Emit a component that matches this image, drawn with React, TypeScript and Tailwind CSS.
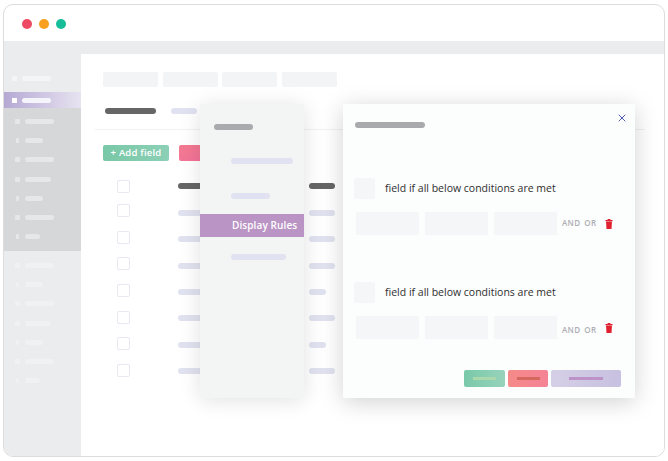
import { X } from "lucide-react"
import { clsx as cn } from "clsx"

const FONT = "font-['Open_Sans','Noto_Sans',sans-serif]"

const NAV_ITEMS = [
  { bar: 29, icon: 5 },
  { bar: 18, icon: 3 },
  { bar: 29, icon: 5 },
  { bar: 26, icon: 5 },
  { bar: 18, icon: 3 },
  { bar: 29, icon: 5 },
  { bar: 15, icon: 3 },
]

const ROWS = [
  { top: "mt-[19px]", bar: "mt-[3px]", dark: true, last: 26 },
  { top: "mt-[11px]", bar: "mt-[6px]", dark: false, last: 26 },
  { top: "mt-[14px]", bar: "mt-[5px]", dark: false, last: 26 },
  { top: "mt-[13px]", bar: "mt-[6px]", dark: false, last: 26 },
  { top: "mt-[14px]", bar: "mt-[5px]", dark: false, last: 17 },
  { top: "mt-[14px]", bar: "mt-[4px]", dark: false, last: 26 },
  { top: "mt-[13px]", bar: "mt-[5px]", dark: false, last: 17 },
  { top: "mt-[14px]", bar: "mt-[4px]", dark: false, last: 26 },
]

function NavItem({ bar, icon, tone }: { bar: number; icon: number; tone: "dark" | "light" }) {
  const color = tone === "dark" ? "bg-[#e6e7e9]" : "bg-[#f0f1f2]"
  return (
    <div className="flex h-[19.2px] items-center pl-[11px]">
      <span className="flex w-[5px] justify-center">
        <span className={cn("h-[5px] rounded-[1px]", color)} style={{ width: icon }} />
      </span>
      <span className={cn("ml-[5px] h-[5px] rounded-full", color)} style={{ width: bar }} />
    </div>
  )
}

function Sidebar() {
  return (
    <div className="flex w-[77px] shrink-0 flex-col bg-[#ebecee]">
      <div className="mt-[15px] flex h-[19px] items-center pl-[8px]">
        <span className="h-[5px] w-[5px] bg-[#f4f5f6]" />
        <span className="ml-[5px] h-[5px] w-[29px] rounded-full bg-[#f4f5f6]" />
      </div>
      <div className="mt-[4px] flex h-[16px] items-center bg-gradient-to-r from-[#b5a9d4] to-[#e8e3f1] pl-[8px]">
        <span className="h-[5px] w-[5px] bg-white" />
        <span className="ml-[5px] h-[5px] w-[29px] rounded-full bg-[#f5f4fa]" />
      </div>
      <div className="flex h-[143px] flex-col bg-[#d6d7d9] pt-[4px]">
        {NAV_ITEMS.map((item, i) => (
          <NavItem key={i} bar={item.bar} icon={item.icon} tone="dark" />
        ))}
      </div>
      <div className="mt-[5px] flex flex-col">
        {NAV_ITEMS.map((item, i) => (
          <NavItem key={i} bar={item.bar} icon={item.icon} tone="light" />
        ))}
      </div>
    </div>
  )
}

function Table() {
  return (
    <div className="flex flex-col pl-[36px]">
      {ROWS.map((row, i) => (
        <div key={i} className={cn("flex items-start", row.top)}>
          <span className="h-[13px] w-[13px] rounded-[2px] border border-[#e9e8f3] bg-white" />
          <span
            className={cn("ml-[48px] h-[6px] w-[60px] rounded-full", row.dark ? "bg-[#666666]" : "bg-[#e0e2ef]", row.bar)}
          />
          <span
            className={cn("ml-[71px] h-[6px] rounded-full", row.dark ? "bg-[#666666]" : "bg-[#e0e2ef]", row.bar)}
            style={{ width: row.last }}
          />
        </div>
      ))}
    </div>
  )
}

function Trash({ className }: { className?: string }) {
  return (
    <svg viewBox="0 0 8 10" className={cn("h-[10px] w-[8px]", className)} fill="#e0202f">
      <rect x="2.6" y="0" width="2.8" height="1" />
      <rect x="0.4" y="1" width="7.2" height="1.2" />
      <path d="M1 2.6h6l-.5 7.4h-5z" />
    </svg>
  )
}

function ConditionGroup({ andClass }: { andClass: string }) {
  return (
    <div>
      <div className="flex items-center">
        <span className="h-[21px] w-[21px] rounded-[3px] bg-[#f5f6f8]" />
        <span className="ml-[10px] text-[10.5px] leading-none text-[#2f2f2f]">
          field if all below conditions are met
        </span>
      </div>
      <div className="ml-[2px] mt-[13px] flex h-[24px] items-start gap-[6px]">
        <span className="h-[23px] w-[63px] bg-[#f5f6f8]" />
        <span className="h-[23px] w-[63px] bg-[#f5f6f8]" />
        <span className="h-[23px] w-[63px] bg-[#f5f6f8]" />
        <span className={cn("-ml-[1px] text-[8px] font-semibold leading-none tracking-[0.3px] text-[#aeafb3]", andClass)}>
          AND
        </span>
        <span className={cn("-ml-[2px] text-[8px] font-semibold leading-none tracking-[0.3px] text-[#aeafb3]", andClass)}>
          OR
        </span>
        <Trash className="ml-[3px] mt-[7px]" />
      </div>
    </div>
  )
}

function RulesModal() {
  return (
    <div className="absolute left-[343px] top-[104px] flex h-[294px] w-[292px] flex-col bg-[#fcfdfd] pl-[11px] shadow-[0_4px_22px_rgba(0,0,0,0.18)]">
      <X className="absolute right-[7px] top-[8px] h-[12px] w-[12px] text-[#4f5eb0]" strokeWidth={2} />
      <span className="ml-[1px] mt-[18px] h-[6px] w-[70px] rounded-full bg-[#a9aaad]" />
      <div className="mt-[50px]">
        <ConditionGroup andClass="mt-[7px]" />
      </div>
      <div className="mt-[46px]">
        <ConditionGroup andClass="mt-[10px]" />
      </div>
      <div className="mt-[30px] flex justify-end gap-[3px] pr-[14px]">
        <div className="flex h-[17px] w-[41px] items-center justify-center rounded-[2px] bg-gradient-to-r from-[#79c9a9] to-[#97d3bb]">
          <span className="h-[3px] w-[23px] bg-[#acd8ac]" />
        </div>
        <div className="flex h-[17px] w-[40px] items-center justify-center rounded-[2px] bg-gradient-to-r from-[#f58a88] to-[#f58396]">
          <span className="h-[3px] w-[23px] bg-[#d5675e]" />
        </div>
        <div className="flex h-[17px] w-[70px] items-center justify-center rounded-[2px] bg-gradient-to-r from-[#d5cfe6] to-[#c7c0e0]">
          <span className="h-[3px] w-[34px] bg-[#bd92c8]" />
        </div>
      </div>
    </div>
  )
}

function FieldMenu() {
  return (
    <div className="absolute left-[200px] top-[104px] flex h-[294px] w-[104px] flex-col bg-[#f3f4f4] shadow-[0_2px_20px_rgba(0,0,0,0.12)]">
      <span className="ml-[14px] mt-[20px] h-[6px] w-[39px] rounded-full bg-[#a9aaad]" />
      <span className="ml-[31px] mt-[28px] h-[6px] w-[62px] rounded-full bg-[#e0e2f1]" />
      <span className="ml-[31px] mt-[29px] h-[6px] w-[39px] rounded-full bg-[#e0e2f1]" />
      <div className="mt-[15px] flex h-[23px] items-center bg-[#b994c4] pl-[32px] text-[10px] font-semibold tracking-[0.1px] text-white">
        Display Rules
      </div>
      <span className="ml-[31px] mt-[17px] h-[6px] w-[55px] rounded-full bg-[#e0e2f1]" />
    </div>
  )
}

function Main() {
  return (
    <div className="flex-1 bg-white">
      <div className="ml-[22px] mt-[18px] flex gap-[4.5px]">
        <span className="h-[15px] w-[55px] rounded-[2px] bg-[#f3f4f5]" />
        <span className="h-[15px] w-[55px] rounded-[2px] bg-[#f3f4f5]" />
        <span className="h-[15px] w-[55px] rounded-[2px] bg-[#f3f4f5]" />
        <span className="h-[15px] w-[55px] rounded-[2px] bg-[#f3f4f5]" />
      </div>
      <div className="ml-[14px] mr-[19px] mt-[21px] h-[22px] border-b border-[#f1f1f3] pl-[10px]">
        <div className="flex items-center gap-[15px]">
          <span className="h-[6px] w-[51px] rounded-full bg-[#666666]" />
          <span className="h-[6px] w-[26px] rounded-full bg-[#e0e2f1]" />
        </div>
      </div>
      <div className="ml-[22px] mt-[15px] flex gap-[10px]">
        <div className="flex h-[16px] w-[66px] items-center justify-center rounded-[2px] bg-gradient-to-r from-[#79c8a7] to-[#8cd0b6] text-[9.5px] font-semibold tracking-[0.2px] text-white">
          + Add field
        </div>
        <span className="h-[16px] w-[40px] rounded-[2px] bg-gradient-to-br from-[#f27b8f] to-[#f56f9c]" />
      </div>
      <Table />
    </div>
  )
}

export default function App() {
  return (
    <div className={cn("relative h-[461px] w-[668px] overflow-hidden bg-white", FONT)}>
      <div className="absolute left-[3px] top-[4px] flex h-[453px] w-[662px] flex-col overflow-hidden rounded-[10px] border border-[#dcdcdc] bg-white">
        <div className="flex h-[36px] shrink-0 items-center gap-[7px] pl-[18px] pt-[1px]">
          <span className="h-[10px] w-[10px] rounded-full bg-[#ef4a63]" />
          <span className="h-[10px] w-[10px] rounded-full bg-[#f9a11f]" />
          <span className="h-[10px] w-[10px] rounded-full bg-[#17bd99]" />
        </div>
        <div className="h-[13px] shrink-0 bg-[#ebecee]" />
        <div className="flex flex-1">
          <Sidebar />
          <Main />
        </div>
      </div>
      <FieldMenu />
      <RulesModal />
    </div>
  )
}
